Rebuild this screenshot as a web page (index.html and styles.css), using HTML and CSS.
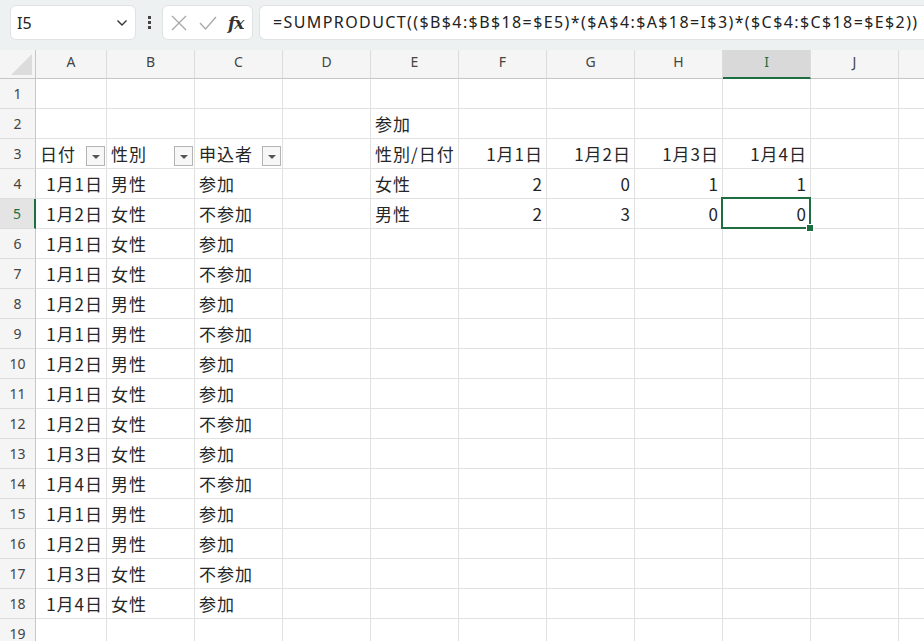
FILE: index.html
```html
<!DOCTYPE html>
<html lang="ja">
<head>
    <meta charset="UTF-8">
    <meta name="viewport" content="width=device-width, initial-scale=1.0">
    <title>Sheet1</title>
    <link rel="stylesheet" href="styles.css">
</head>
<body>
<div class="toolbar">
    <div class="namebox">
        <span>I5</span>
        <svg class="chev" width="12" height="8" viewBox="0 0 12 8"><path d="M1.5 1.5 L6 6 L10.5 1.5" fill="none" stroke="#333" stroke-width="1.4"/></svg>
    </div>
    <div class="dots"><i></i><i></i><i></i></div>
    <div class="fxbox">
        <svg width="18" height="18" viewBox="0 0 18 18"><path d="M2 2 L16 16 M16 2 L2 16" stroke="#a8a8a8" stroke-width="1.3"/></svg>
        <svg width="20" height="18" viewBox="0 0 20 18"><path d="M2 9 L7.5 15 L18 3" fill="none" stroke="#a8a8a8" stroke-width="1.3"/></svg>
        <span class="fx">fx</span>
    </div>
    <div class="formula">=SUMPRODUCT(($B$4:$B$18=$E5)*($A$4:$A$18=I$3)*($C$4:$C$18=$E$2))</div>
</div>

<div class="sheet" id="sheet"></div>

<script>
    // K is only partly in view, its letter is past the edge
    const cols = ['A', 'B', 'C', 'D', 'E', 'F', 'G', 'H', 'I', 'J', 'K'];
    const rowCount = 19;

    // cell values; numbers and dates go right
    const cells = {
        E2: '参加',
        A3: '日付', B3: '性別', C3: '申込者',
        E3: '性別/日付', F3: '1月1日', G3: '1月2日', H3: '1月3日', I3: '1月4日',
        E4: '女性', F4: 2, G4: 0, H4: 1, I4: 1,
        E5: '男性', F5: 2, G5: 3, H5: 0, I5: 0
    };
    const list = [
        ['1月1日', '男性', '参加'],
        ['1月2日', '女性', '不参加'],
        ['1月1日', '女性', '参加'],
        ['1月1日', '女性', '不参加'],
        ['1月2日', '男性', '参加'],
        ['1月1日', '男性', '不参加'],
        ['1月2日', '男性', '参加'],
        ['1月1日', '女性', '参加'],
        ['1月2日', '女性', '不参加'],
        ['1月3日', '女性', '参加'],
        ['1月4日', '男性', '不参加'],
        ['1月1日', '男性', '参加'],
        ['1月2日', '男性', '参加'],
        ['1月3日', '女性', '不参加'],
        ['1月4日', '女性', '参加']
    ];
    list.forEach((r, i) => {
        cells['A' + (i + 4)] = r[0];
        cells['B' + (i + 4)] = r[1];
        cells['C' + (i + 4)] = r[2];
    });
    const filters = ['A3', 'B3', 'C3'];
    const rightAligned = ['F3', 'G3', 'H3', 'I3'];

    const sheet = document.getElementById('sheet');
    let html = '<div class="corner"><i></i></div>';
    cols.forEach(c => {
        const label = c === 'K' ? '' : c;
        html += `<div class="colhead${c === 'I' ? ' active' : ''}">${label}</div>`;
    });
    for (let r = 1; r <= rowCount; r++) {
        html += `<div class="rowhead${r === 5 ? ' active' : ''}">${r}</div>`;
        cols.forEach(c => {
            const ref = c + r;
            const v = cells[ref];
            let cls = 'cell';
            if (typeof v === 'number' || rightAligned.includes(ref) || (c === 'A' && r > 3)) cls += ' num';
            if (ref === 'I5') cls += ' selected';
            let inner = v === undefined ? '' : `<span>${v}</span>`;
            if (filters.includes(ref)) inner += '<b class="filter"></b>';
            html += `<div class="${cls}">${inner}</div>`;
        });
    }
    sheet.innerHTML = html;
</script>
</body>
</html>
```

FILE: styles.css
```css
body {
    margin: 0;
    width: 924px;
    height: 641px;
    overflow: hidden;
    background: #fff;
    font-family: "Noto Sans", "Noto Sans CJK JP", sans-serif;
}
.toolbar {
    height: 50px;
    box-sizing: border-box;
    padding: 5px 0 0 10px;
    background: #eef1f1;
    display: flex;
    align-items: flex-start;
}
.namebox {
    width: 126px;
    height: 35px;
    box-sizing: border-box;
    background: #fff;
    border: 1px solid #dfe3e3;
    border-radius: 6px;
    display: flex;
    align-items: center;
    justify-content: space-between;
    padding: 0 7px 0 6px;
    font-size: 16px;
    color: #222;
}
.dots {
    width: 26px;
    height: 35px;
    display: flex;
    flex-direction: column;
    align-items: center;
    justify-content: center;
    gap: 2px;
}
.dots i {
    width: 3px;
    height: 3px;
    background: #444;
}
.fxbox {
    width: 91px;
    height: 35px;
    box-sizing: border-box;
    background: #fff;
    border: 1px solid #dfe3e3;
    border-radius: 6px;
    display: flex;
    align-items: center;
    gap: 10px;
    padding: 0 6px 0 7px;
}
.fx {
    font-family: "DejaVu Serif", "Liberation Serif", serif;
    font-style: italic;
    font-weight: bold;
    font-size: 17px;
    color: #333;
    letter-spacing: -1px;
}
.formula {
    flex: 1;
    margin-left: 6px;
    height: 35px;
    box-sizing: border-box;
    background: #fff;
    border: 1px solid #dfe3e3;
    border-right: none;
    border-radius: 6px 0 0 6px;
    padding: 5px 0 0 13px;
    font-size: 16px;
    letter-spacing: 1.4px;
    color: #222;
    white-space: nowrap;
    overflow: hidden;
}
.sheet {
    display: grid;
    grid-template-columns: 36px 71px repeat(10, 88px);
    grid-auto-rows: 30px;
    grid-template-rows: 29px;
}
.sheet > div {
    box-sizing: border-box;
    border-right: 1px solid #e1e1e1;
    border-bottom: 1px solid #e1e1e1;
}
.corner {
    background: #f5f5f5;
    border-right: 1px solid #c6c6c6 !important;
    border-bottom: 1px solid #c6c6c6 !important;
    position: relative;
}
.corner i {
    position: absolute;
    right: 3px;
    bottom: 3px;
    width: 0;
    height: 0;
    border-left: 21px solid transparent;
    border-bottom: 21px solid #dcdcdc;
}
.colhead {
    background: #f5f5f5;
    border-bottom: 1px solid #c6c6c6 !important;
    border-right-color: #dcdcdc !important;
    text-align: center;
    font-size: 14px;
    line-height: 24px;
    color: #444;
}
.colhead.active {
    background: #d9d9d9;
    border-bottom: 2px solid #1e6e42 !important;
    color: #1e6e42;
}
.rowhead {
    background: #f5f5f5;
    border-right: 1px solid #c6c6c6 !important;
    border-bottom-color: #dcdcdc !important;
    text-align: center;
    font-size: 14px;
    line-height: 29px;
    color: #444;
}
.rowhead.active {
    background: #e4e4e4;
    border-right: 2px solid #1e6e42 !important;
    color: #1e6e42;
}
.cell {
    position: relative;
    display: flex;
    align-items: center;
    padding: 0 4px;
    font-family: "Noto Sans CJK JP", sans-serif;
    font-size: 17px;
    letter-spacing: 1px;
    color: #262626;
    white-space: nowrap;
}
.cell.num {
    justify-content: flex-end;
    padding-right: 3px;
}
.filter {
    position: absolute;
    right: 1px;
    top: 7px;
    width: 19px;
    height: 20px;
    box-sizing: border-box;
    border: 1px solid #b4b4b4;
    background: #f7f7f7;
}
.filter::after {
    content: "";
    position: absolute;
    left: 5px;
    top: 8px;
    border-left: 4px solid transparent;
    border-right: 4px solid transparent;
    border-top: 4px solid #555;
}
.selected::after {
    content: "";
    position: absolute;
    left: -2px;
    top: -2px;
    right: -1px;
    bottom: -1px;
    border: 2px solid #1e6e42;
}
.selected::before {
    content: "";
    position: absolute;
    right: -4px;
    bottom: -4px;
    width: 6px;
    height: 6px;
    background: #1e6e42;
    border: 1px solid #fff;
    z-index: 2;
}
```
